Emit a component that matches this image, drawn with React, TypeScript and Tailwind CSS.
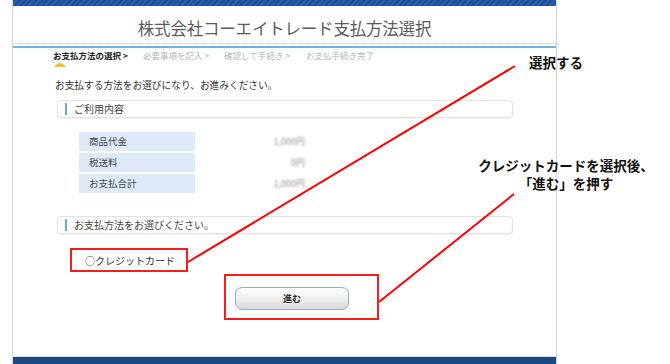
import React from "react";

const jp = "font-['Noto_Sans_CJK_JP','Noto_Sans',sans-serif]";

function SectionHeader({ label }: { label: string }) {
  return (
    <div className="ml-[44px] w-[456px] h-[18px] rounded-[4px] border border-[#e2e2e2] bg-white shadow-[0_1px_1px_rgba(0,0,0,0.06)] flex items-center">
      <div className="ml-[7px] w-[2px] h-[12px] bg-[#6aaec4]" />
      <span className="ml-[7px] text-[10px] leading-none text-[#444]">{label}</span>
    </div>
  );
}

const rows = [
  { label: "商品代金", value: "1,000円" },
  { label: "税送料", value: "0円" },
  { label: "お支払合計", value: "1,000円" },
];

export default function App() {
  return (
    <div className={`relative w-[670px] h-[364px] bg-white overflow-hidden ${jp}`}>
      <div className="ml-[12px] w-[545px] h-[364px] border-l border-r border-[#d6d6d6] flex flex-col">
        <div className="h-[6px] bg-[repeating-linear-gradient(135deg,#1b4c93_0px,#1b4c93_2px,#2d60aa_2px,#2d60aa_4px)]" />
        <div className="pt-[12px] h-[32px] text-center text-[16.5px] leading-[20px] text-[#5a5a5a] tracking-[-0.2px]">
          株式会社コーエイトレード支払方法選択
        </div>
        <div className="mt-[5px] border-b border-dotted border-[#a9cfe2]" />
        <div className="mt-[2px] h-[2px] bg-[#6ab7df]" />
        <div className="pl-[40px] flex items-center h-[12px] mt-[1px] text-[8.5px] leading-none">
          <span className="text-[#222] font-bold w-[90px]">お支払方法の選択 &gt;</span>
          <span className="text-[#b5b5b5] w-[81px]">必要事項を記入 &gt;</span>
          <span className="text-[#b5b5b5] w-[82px]">確認して手続き &gt;</span>
          <span className="text-[#b5b5b5]">お支払手続き完了</span>
        </div>
        <div className="pl-[41px] h-[6px]">
          <svg width="12" height="6" viewBox="0 0 12 6">
            <path d="M0 6 Q6 -2 12 6 Z" fill="#eec12a" />
          </svg>
        </div>
        <div className="ml-[42px] mt-[12px] text-[9.7px] leading-[12px] text-[#333]">
          お支払する方法をお選びになり、お進みください。
        </div>
        <div className="mt-[9px]">
          <SectionHeader label="ご利用内容" />
        </div>
        <div className="mt-[14px] ml-[66px] flex flex-col gap-[2px]">
          {rows.map((r) => (
            <div key={r.label} className="flex h-[19px] items-center">
              <div className="w-[116px] h-full bg-[#dfeaf8] flex items-center pl-[10px] text-[9.5px] text-[#444]">
                {r.label}
              </div>
              <div className="w-[110px] text-right text-[9px] text-[#9c8c9a] blur-[1.2px]">
                {r.value}
              </div>
            </div>
          ))}
        </div>
        <div className="mt-[23px]">
          <SectionHeader label="お支払方法をお選びください。" />
        </div>
        <div className="mt-[14px] ml-[57px] w-[118px] h-[24px] border-2 border-[#ff1a1a] flex items-center pl-[13px] text-[10px] text-[#333]">
          ○クレジットカード
        </div>
        <div className="mt-[2px] ml-[211px] w-[155px] h-[46px] border-2 border-[#ff1a1a] pl-[9px] pt-[11px]">
          <div className="w-[114px] h-[23px] rounded-[7px] border border-[#9aacc4] bg-[linear-gradient(#fdfdfd,#eeeeee_55%,#d9d9d9)] flex items-center justify-center text-[9px] font-bold text-[#333]">
            進む
          </div>
        </div>
        <div className="mt-auto border-t border-[#dcdcdc] h-[8px] bg-[#1c4a80]" />
      </div>

      <svg className="absolute inset-0 pointer-events-none" width="670" height="364">
        <line x1="188" y1="262" x2="515" y2="66" stroke="#ff0000" strokeWidth="2" />
        <line x1="379" y1="302" x2="514" y2="194" stroke="#ff0000" strokeWidth="2" />
      </svg>
      <div className="absolute left-[529px] top-[54px] text-[13.5px] font-bold leading-[16px] text-[#111]">
        選択する
      </div>
      <div className="absolute left-[466px] top-[156px] w-[200px] text-center text-[13.5px] font-bold leading-[18px] text-[#111]">
        <div>クレジットカードを選択後、</div>
        <div>「進む」を押す</div>
      </div>
    </div>
  );
}
